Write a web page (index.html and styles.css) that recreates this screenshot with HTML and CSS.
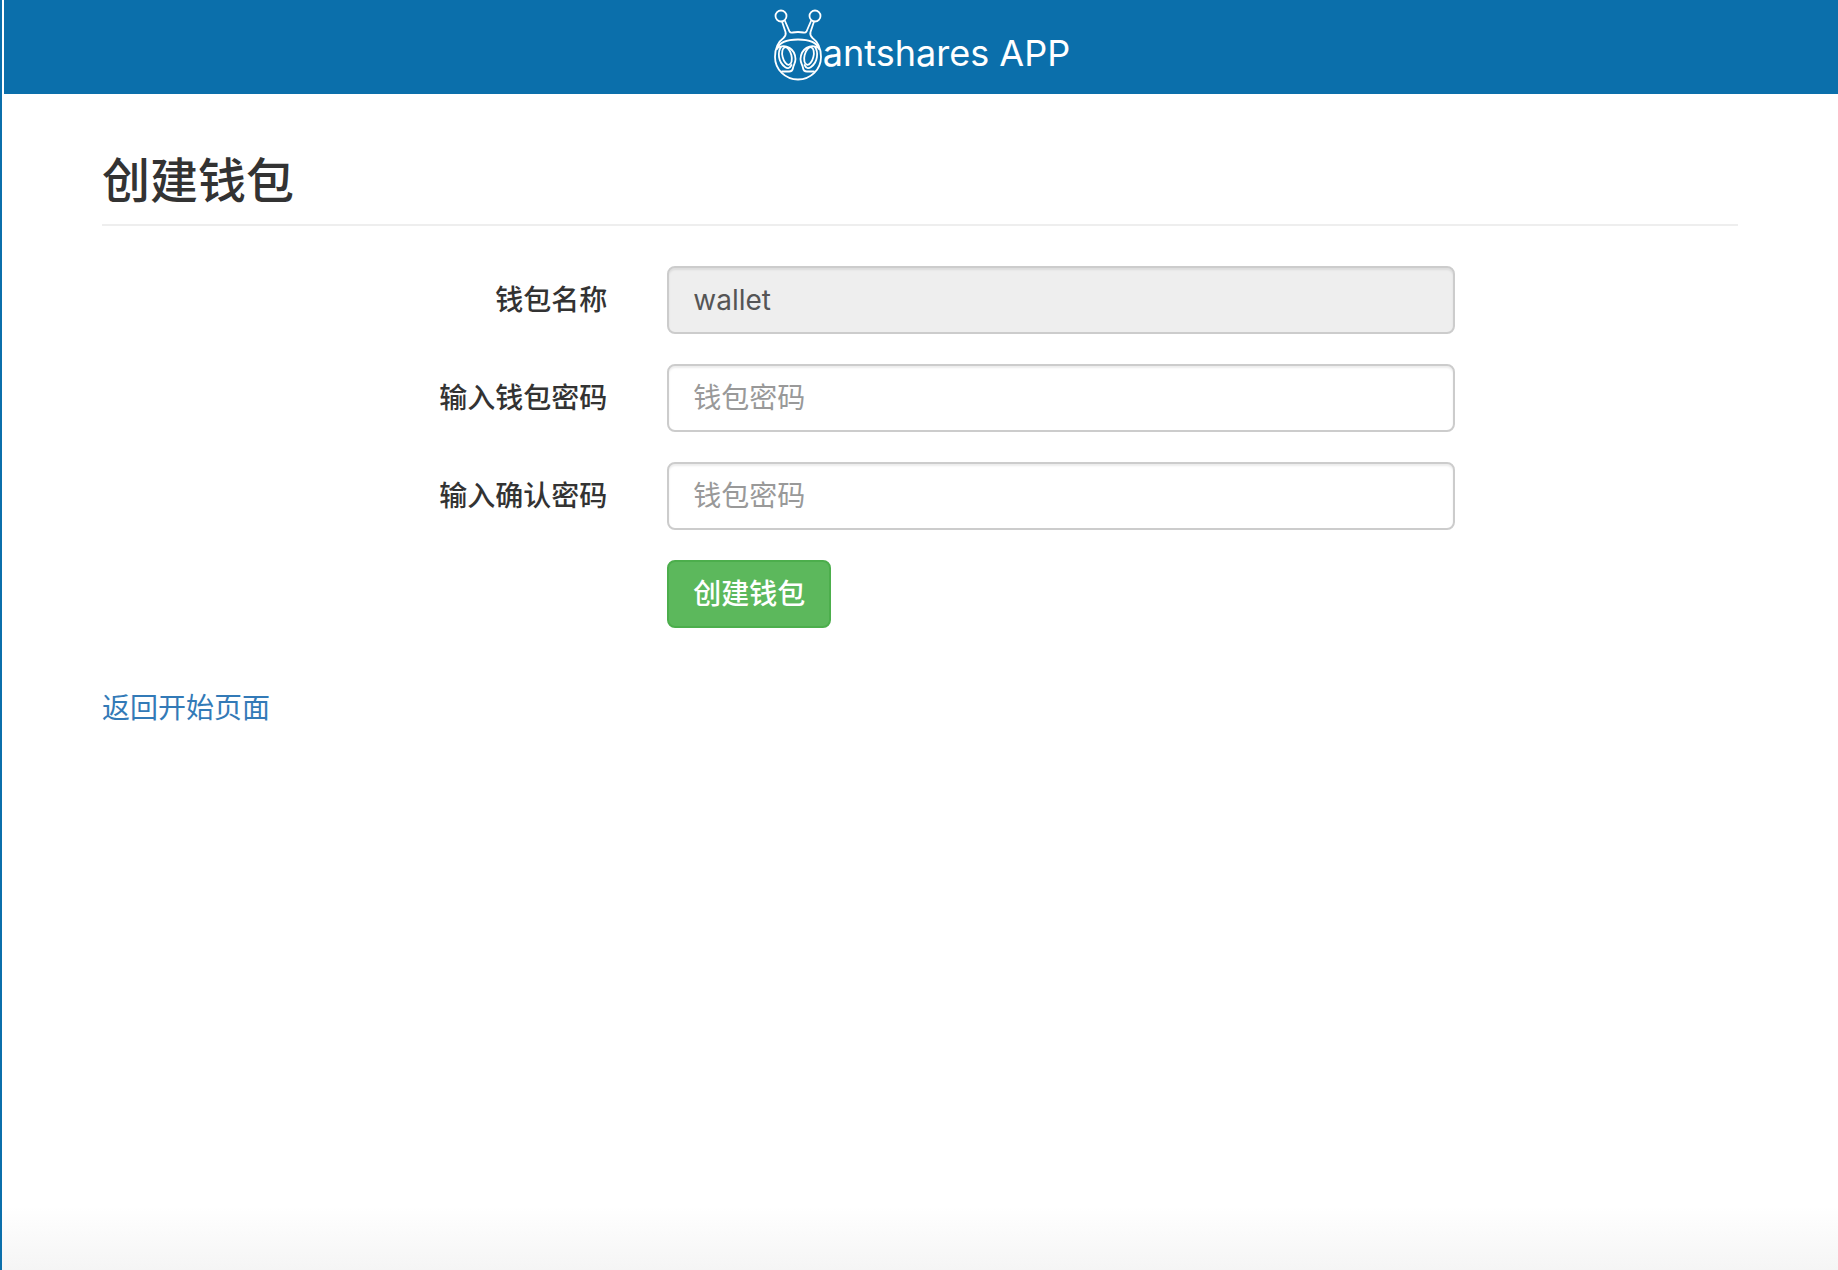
FILE: index.html
```html
<!DOCTYPE html>
<html lang="zh-CN">
<head>
<meta charset="utf-8">
<meta name="viewport" content="width=device-width, initial-scale=1">
<title>antshares APP</title>
<link rel="stylesheet" href="styles.css">
</head>
<body>
<div class="page">
  <header class="header">
    <svg class="logo" viewBox="0 0 48 72" fill="none" stroke="#fff" stroke-width="1.8" stroke-linecap="round" stroke-linejoin="round" aria-hidden="true">
      <circle cx="7" cy="7" r="5.500"/>
      <circle cx="41" cy="7" r="5.500"/>
      <path d="M11 12L15.500 22.500Q16.500 24 18.500 23.500Q24 22.500 29.500 23.500Q31.500 24 32.500 22.500L37 12"/>
      <path d="M8 12.500L11.500 23Q12.500 26 9.500 29C4 33 1 40 1 48A23 22.500 0 0 0 47 48C47 40 44 33 38.500 29Q35.500 26 36.500 23L40 12.500"/>
      <path d="M3 40Q6 30.500 24 30.500T45 40"/>
      <path d="M3 39C12 34 21 40 21.500 50C21.500 54 19.500 56 19 59Q18.500 62.500 15 62.500H8M45 39C36 34 27 40 26.500 50C26.500 54 28.500 56 29 59Q29.500 62.500 33 62.500H40"/>
      <path d="M7 38C3.500 43 4 53 11 58Q15 61 17.500 56M41 38C44.500 43 44 53 37 58Q33 61 30.500 56"/>
      <ellipse cx="13" cy="47" rx="4.500" ry="9" transform="rotate(-14 13 47)"/>
      <ellipse cx="35" cy="47" rx="4.500" ry="9" transform="rotate(14 35 47)"/>
    </svg>
    <span class="brand">antshares APP</span>
  </header>
  <main class="content">
    <h1 class="title">创建钱包</h1>
    <form class="form">
      <label class="label" for="name">钱包名称</label>
      <input class="field" id="name" type="text" value="wallet" readonly>
      <label class="label" for="password">输入钱包密码</label>
      <input class="field" id="password" type="password" placeholder="钱包密码">
      <label class="label" for="confirm">输入确认密码</label>
      <input class="field" id="confirm" type="password" placeholder="钱包密码">
      <button class="submit" type="submit">创建钱包</button>
    </form>
    <a class="back" href="#">返回开始页面</a>
  </main>
</div>
</body>
</html>
```
FILE: styles.css
```css
* {
  box-sizing: border-box;
}

body {
  margin: 0;
  color: #333;
  font-family: "Century Gothic", Inter, "Noto Sans CJK SC", sans-serif;
  font-size: 28px;
  line-height: 40px;
}

.page {
  min-height: 100vh;
  border-left: 2px solid #0b6fab;
  background: linear-gradient(to top, #f5f5f5, #fff 64px);
}

.header {
  display: flex;
  justify-content: center;
  height: 94px;
  margin-left: 2px;
  padding: 9px 0 0 2px;
  gap: 1px;
  background: #0b6fab;
  color: #fff;
}

.logo {
  width: 48px;
  height: 72px;
}

.brand {
  font-size: 36px;
  line-height: 88px;
}

.content {
  padding: 0 100px;
}

.title {
  margin: 50px 0 40px;
  padding-bottom: 6px;
  border-bottom: 2px solid #eee;
  font-size: 48px;
  font-weight: 500;
  line-height: 74px;
}

.form {
  display: grid;
  grid-template-columns: repeat(12, 1fr);
  row-gap: 30px;
  margin: 0 -30px;
}

.label {
  grid-column: 1 / 5;
  padding: 14px 30px;
  font-weight: 500;
  text-align: right;
}

.field {
  grid-column: 5 / 11;
  height: 68px;
  margin: 0 30px;
  padding: 12px 24px;
  border: 2px solid #ccc;
  border-radius: 8px;
  background: #fff;
  box-shadow: inset 0 2px 2px rgba(0, 0, 0, 0.075);
  color: #555;
  font: inherit;
  min-width: 0;
}

.field:read-only {
  background: #eee;
}

.field::placeholder {
  color: #999;
  opacity: 1;
}

.submit {
  grid-column: 5 / 11;
  justify-self: start;
  height: 68px;
  margin: 0 30px;
  padding: 12px 24px;
  border: 2px solid #4cae4c;
  border-radius: 8px;
  background: #5cb85c;
  color: #fff;
  font: inherit;
  font-weight: 500;
}

.back {
  display: inline-block;
  margin-top: 60px;
  color: #337ab7;
  text-decoration: none;
}
```
